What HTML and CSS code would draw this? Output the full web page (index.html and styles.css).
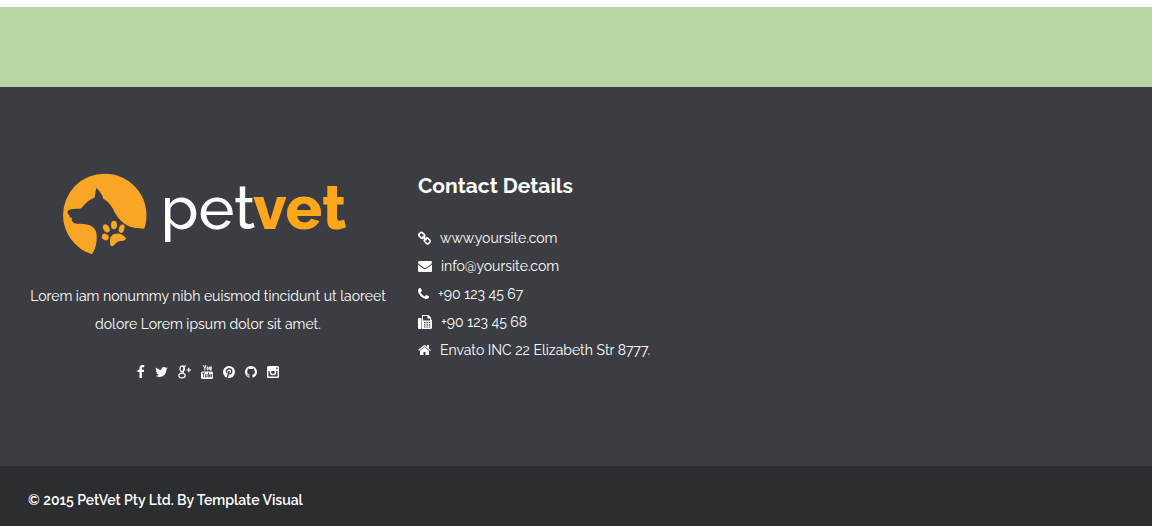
FILE: index.html
```html
<!DOCTYPE html>
<html lang="en">

<head>
    <meta charset="UTF-8">
    <meta name="viewport" content="width=device-width, initial-scale=1.0">
    <title>PetVet</title>
    <link rel="stylesheet" href="styles.css">
</head>

<body>
    <div class="green-band"></div>

    <footer class="footer">
        <div class="footer-about">
            <svg class="logo" viewBox="38 6 870 300" role="img" aria-label="petvet">
                <!-- dog head cut out of the circle -->
                <path class="logo-orange" d="M282 191A125 125 0 0 0 163 26A125 125 0 0 0 38 151A125 125 0 0 0 125 268C136 250 140 235 139 210C138 195 130 183 112 179C95 175 80 178 70 174L64 167L65 159L58 157L57 150L52 146L52 138Q54 135 62 133C75 131 85 133 93 130C103 117 115 104 133 98C134 88 136 78 138 69C147 77 156 88 159 101C170 107 180 118 187 130C200 160 220 180 245 187C258 191 270 191 282 191Z"/>
                <!-- paw -->
                <g class="logo-orange">
                    <ellipse cx="168" cy="190" rx="9" ry="13" transform="rotate(-28 168 190)"/>
                    <ellipse cx="191" cy="180" rx="9" ry="13"/>
                    <ellipse cx="214" cy="191" rx="8" ry="13" transform="rotate(18 214 191)"/>
                    <ellipse cx="165" cy="216" rx="11" ry="9" transform="rotate(35 165 216)"/>
                    <path d="M180 240C178 225 178 212 192 207C205 203 215 207 220 213C230 219 228 226 218 227C208 228 200 229 195 236C190 244 182 246 180 240Z"/>
                </g>
                <text class="logo-text logo-pet" x="331" y="193">pet</text>
                <text class="logo-text logo-vet" x="608" y="193">vet</text>
            </svg>
            <p class="about-text">Lorem iam nonummy nibh euismod tincidunt ut laoreet dolore Lorem ipsum dolor sit amet.</p>
            <div class="social">
                <a href="#" aria-label="Facebook">
                    <svg class="icon" width="8" height="14" viewBox="416 0 1024 1792"><path d="M1343 12v264h-157q-86 0-116 36t-30 108v189h293l-39 296h-254v759h-306v-759h-255v-296h255v-218q0-186 104-288.500t277-102.500q147 0 228 12z"/></svg>
                </a>
                <a href="#" aria-label="Twitter">
                    <svg class="icon" width="13" height="14" viewBox="64 0 1664 1792"><path d="M1684 408q-67 98-162 167 1 14 1 42 0 130-38 259.500t-115.500 248.500-184.500 210.500-258 146-323 54.500q-271 0-496-145 35 4 78 4 225 0 401-138-105-2-188-64.500t-114-159.500q33 5 61 5 43 0 85-11-112-23-185.500-111.500t-73.500-205.500v-4q68 38 146 41-66-44-105-115t-39-154q0-88 44-163 121 149 294.500 238.500t371.500 99.500q-8-38-8-74 0-134 94.500-228.500t228.500-94.500q140 0 236 102 109-21 205-78-37 115-142 178 93-10 186-50z"/></svg>
                </a>
                <a href="#" aria-label="Google Plus">
                    <svg class="icon icon-line" width="13" height="14" viewBox="0 0 13 14"><ellipse cx="4" cy="3.800" rx="2" ry="2.800"/><path d="M4 1H8M5.500 1.200Q7.300 3.800 5.400 6Q4.200 7.200 5.400 8"/><ellipse cx="4" cy="10.500" rx="3.200" ry="2.400"/><path d="M10.700 2.700V7.300M8.500 5H13"/></svg>
                </a>
                <a href="#" aria-label="YouTube">
                    <svg class="icon" width="12" height="14" viewBox="0 0 12 14"><path d="M2 0H3L3.800 2.300L4.500 0H5.500L4.300 3.500V5.500H3.300V3.500Z"/><path class="line" d="M6.200 2.300V4.200Q6.200 5 6.700 5T7.200 4.200V2.500Q7.200 1.800 6.700 1.800T6.200 2.500M8.700 1.500V4.800Q9.300 5.300 10 4.500V1.500V5.500"/><rect x="0" y="6.500" width="12" height="7.500" rx="1.500"/><path class="line-dark" d="M1 8H4M2.500 8V12.500M4.500 9V12H6V9M7.400 7.500V12H8.500V9.500H7.400M11 11.500V12H9.900V9.500H11V10.700H9.900"/></svg>
                </a>
                <a href="#" aria-label="Pinterest">
                    <svg class="icon" width="12" height="14" viewBox="0 0 12 14"><circle cx="6" cy="7" r="6"/><path class="pin-dark" d="M4 8.100C2.600 6.200 3.800 3.800 6.200 3.800C8.500 3.800 9.200 5.600 8.500 7.500C7.900 9.200 6.200 9.300 5.700 8.300M6.200 5.800L4.400 12.500"/></svg>
                </a>
                <a href="#" aria-label="GitHub">
                    <svg class="icon" width="12" height="14" viewBox="128 0 1536 1792"><path d="M896 128q209 0 385.500 103t279.500 279.500 103 385.500q0 251-146.500 451.500t-378.500 277.500q-27 5-40-7t-13-30q0-3 .5-76.500t.5-134.500q0-97-52-142 57-6 102.500-18t94-39 81-66.500 53-105 20.500-150.500q0-119-79-206 37-91-8-204-28-9-81 11t-92 44l-38 24q-93-26-192-26t-192 26q-16-11-42.500-27t-83.500-38.500-85-13.500q-45 113-8 204-79 87-79 206 0 85 20.500 150t52.500 105 80.500 67 94 39 102.500 18q-39 36-49 103-21 10-45 15t-57 5-65.500-21.500-55.500-62.500q-19-32-48.500-52t-49.500-24l-20-3q-21 0-29 4.500t-5 11.500 9 14 13 12l7 5q22 10 43.500 38t31.500 51l10 23q13 38 44 61.500t67 30 69.500 7 55.500-3.500l23-4q0 38 .5 88.500t.5 54.500q0 18-13 30t-40 7q-232-77-378.500-277.500t-146.500-451.500q0-209 103-385.500t279.500-279.500 385.500-103z"/></svg>
                </a>
                <a href="#" aria-label="Instagram">
                    <svg class="icon" width="12" height="14" viewBox="0 0 12 14"><path fill-rule="evenodd" d="M1.500 1H10.500Q12 1 12 2.500V11.500Q12 13 10.500 13H1.500Q0 13 0 11.500V2.500Q0 1 1.500 1ZM1.400 6V11.100Q1.400 11.600 1.900 11.600H10.100Q10.600 11.600 10.600 11.100V6H9.400V2.400H8.300V4.500H10.600V2.400H8.300V4.500H9.400V6Z"/><circle class="line instagram-lens" cx="6" cy="7" r="2.600"/></svg>
                </a>
            </div>
        </div>

        <div class="footer-contact">
            <h3 class="footer-title">Contact Details</h3>
            <ul class="contact-list">
                <li>
                    <svg class="icon" width="13" height="14" viewBox="0 0 13 14"><g class="link-line"><rect x="1" y="2" width="5.500" height="4.600" rx="1.700" transform="rotate(45 3.700 4.300)"/><rect x="6.500" y="7.600" width="5.500" height="4.600" rx="1.700" transform="rotate(45 9.300 9.900)"/><path d="M4.500 5.200L8.500 9.200"/></g></svg>
                    <a href="#">www.yoursite.com</a>
                </li>
                <li>
                    <svg class="icon" width="14" height="14" viewBox="0 0 1792 1792"><path d="M1792 710v794q0 66-47 113t-113 47h-1472q-66 0-113-47t-47-113v-794q44 49 101 87 362 246 497 345 57 42 92.500 65.500t94.500 48 110 24.500h2q51 0 110-24.500t94.500-48 92.500-65.500q170-123 498-345 57-39 100-87zm0-294q0 79-49 151t-122 123q-376 261-468 325-10 7-42.500 31t-54 38.500-52 32.500-57.500 27-50 9h-2q-23 0-50-9t-57.500-27-52-32.500-54-38.500-42.500-31q-91-64-262-182.500t-205-142.500q-62-42-117-115.500t-55-136.500q0-78 41.500-130t118.500-52h1472q65 0 112.500 47t47.500 113z"/></svg>
                    <a href="#">info@yoursite.com</a>
                </li>
                <li>
                    <svg class="icon" width="11" height="14" viewBox="192 0 1408 1792"><path d="M1600 1240q0 27-10 70.500t-21 68.500q-21 50-122 106-94 51-186 51-27 0-53-3.500t-57.500-12.500-47-14.500-55.500-20.500-49-18q-98-35-175-83-127-79-264-216t-216-264q-48-77-83-175-3-9-18-49t-20.500-55.500-14.500-47-12.500-57.500-3.500-53q0-92 51-186 56-101 106-122 25-11 68.500-21t70.500-10q14 0 21 3 18 6 53 76 11 19 30 54t35 63.500 31 53.500q3 4 17.500 25t21.500 35.500 7 28.500q0 20-28.500 50t-62 55-62 53-28.500 46q0 9 5 22.500t8.500 20.500 14 24 11.500 19q76 137 174 235t235 174q2 1 19 11.500t24 14 20.500 8.500 22.500 5q18 0 46-28.500t53-62 55-62 50-28.500q14 0 28.500 7t35.500 21.500 25 17.500q25 15 53.500 31t63.500 35 54 30q70 35 76 53 3 7 3 21z"/></svg>
                    <span>+90 123 45 67</span>
                </li>
                <li>
                    <svg class="icon" width="14" height="14" viewBox="0 0 14 14"><rect x="0" y="3" width="3.500" height="11" rx="1"/><path fill-rule="evenodd" d="M4 0H10.500L13 2.500V4.300Q14 4.700 14 5.500V12.500Q14 14 12.500 14H4ZM5 1V5.500H12V3.500H9.500V1ZM6 7V8.200H7.500V7ZM8.400 7V8.200H9.900V7ZM10.800 7V8.200H12.200V7ZM6 9.200V10.400H7.500V9.200ZM8.400 9.200V10.400H9.900V9.200ZM10.800 9.200V10.400H12.200V9.200ZM6 11.400V12.600H7.500V11.400ZM8.400 11.400V12.600H9.900V11.400ZM10.800 11.400V12.600H12.200V11.400Z"/></svg>
                    <span>+90 123 45 68</span>
                </li>
                <li>
                    <svg class="icon" width="13" height="14" viewBox="64 0 1664 1792"><path d="M1472 992v480q0 26-19 45t-45 19h-384v-384h-256v384h-384q-26 0-45-19t-19-45v-480q0-1 .5-3t.5-3l575-474 575 474q1 2 1 6zm223-69l-62 74q-8 9-21 11h-3q-13 0-21-7l-692-577-692 577q-12 8-24 7-13-2-21-11l-62-74q-8-10-7-23.500t11-21.500l719-599q32-26 76-26t76 26l244 204v-195q0-14 9-23t23-9h192q14 0 23 9t9 23v408l219 182q10 8 11 21.500t-7 23.500z"/></svg>
                    <span>Envato INC 22 Elizabeth Str 8777.</span>
                </li>
            </ul>
        </div>
    </footer>

    <div class="copyright">© 2015 PetVet Pty Ltd. By Template Visual</div>
</body>

</html>
```
FILE: styles.css
```css
* {
    box-sizing: border-box;
}

body {
    margin: 0;
    padding-top: 7px;
    background: #fff;
    color: #fff;
    font-family: Raleway, Lato, sans-serif;
    font-size: 14px;
    font-weight: 400;
    line-height: 28px;
}

a {
    color: inherit;
    text-decoration: none;
}

.green-band {
    height: 80px;
    background: #b8d6a3;
}

.footer {
    display: grid;
    grid-template-columns: 360px 1fr;
    gap: 30px;
    padding: 80px 28px;
    background: #3c3d42;
}

.footer-about {
    display: flex;
    flex-direction: column;
    align-items: center;
    text-align: center;
}

.logo {
    width: 290px;
    height: 100px;
}

.logo-orange {
    fill: #f9a526;
}

.logo-text {
    font-family: Raleway, Inter, sans-serif;
    font-size: 182px;
}

.logo-pet {
    fill: #fff;
    font-weight: 500;
}

.logo-vet {
    fill: #ffa71c;
    font-weight: 800;
}

.about-text {
    margin: 15px 0 20px;
}

.social {
    display: flex;
    gap: 10px;
    height: 28px;
    align-items: center;
}

.social a {
    display: flex;
}

.icon {
    display: block;
    flex: none;
    fill: #fff;
}

.icon-line {
    fill: none;
    stroke: #fff;
    stroke-width: 1.2;
}

.line {
    fill: none;
    stroke: #fff;
}

.instagram-lens {
    stroke-width: 1.5;
}

.line-dark {
    fill: none;
    stroke: #3c3d42;
    stroke-width: 0.8;
}

.pin-dark {
    fill: none;
    stroke: #3c3d42;
    stroke-width: 1.4;
}

.link-line {
    fill: none;
    stroke: #fff;
    stroke-width: 1.7;
}

.footer-title {
    margin: 0 0 19px;
    font-size: 21px;
    font-weight: 700;
    line-height: 38px;
}

.contact-list {
    margin: 0;
    padding: 0;
    list-style: none;
}

.contact-list li {
    display: flex;
    align-items: center;
    gap: 9px;
}

.copyright {
    padding: 20px 28px 12px;
    background: #2c2d31;
    font-weight: 600;
}
```
